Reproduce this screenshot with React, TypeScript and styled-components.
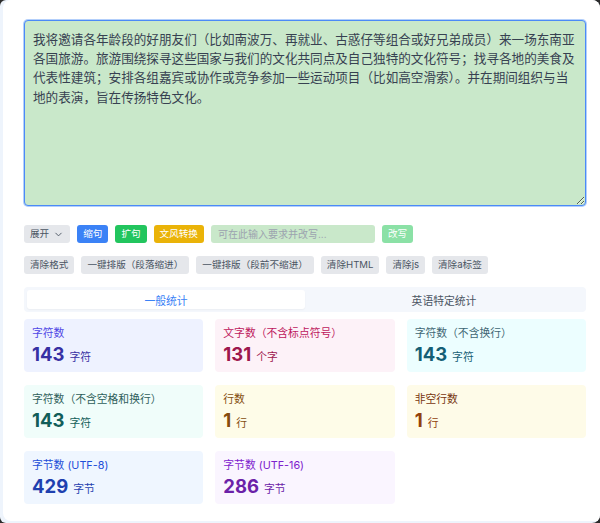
import React from "react";
import styled, { createGlobalStyle } from "styled-components";
import { ChevronDown } from "lucide-react";

const GlobalStyle = createGlobalStyle`
  html, body {
    margin: 0;
    padding: 0;
    background: #2b2b2b;
  }
  body {
    font-family: Inter, "Noto Sans CJK SC", sans-serif;
    color: #374151;
  }
  * { box-sizing: border-box; }
`;

const Frame = styled.div`
  width: 600px;
  height: 523px;
  background: #eef4fc;
  border-radius: 6px 8px 8px 6px;
  overflow: hidden;
  display: flex;
  padding: 0 0 2px 3px;
`;

const Panel = styled.div`
  flex: 1;
  background: #fff;
  border-radius: 8px 0 0 8px;
  padding: 20px 14px 0 21px;
  display: flex;
  flex-direction: column;
`;

const TextArea = styled.textarea`
  display: block;
  width: 100%;
  height: 186px;
  resize: vertical;
  background: #c9e8ca;
  border: 1px solid #4b8af7;
  box-shadow: 0 0 0 1px #b3cffb;
  border-radius: 4px;
  padding: 9px 8px;
  font-family: Inter, "Noto Sans CJK SC", sans-serif;
  font-size: 12.6px;
  line-height: 19.2px;
  color: #374151;
  outline: none;
`;

const Row = styled.div<{ $mt: number }>`
  display: flex;
  align-items: center;
  gap: 7px;
  margin-top: ${(p) => p.$mt}px;
`;

const tones = {
  gray: { bg: "#e5e7eb", fg: "#4b5563" },
  blue: { bg: "#3b82f6", fg: "#ffffff" },
  green: { bg: "#22c55e", fg: "#ffffff" },
  yellow: { bg: "#eab308", fg: "#ffffff" },
  mint: { bg: "#8be1a6", fg: "#ffffff" },
};

type Tone = keyof typeof tones;

const Btn = styled.button<{ $tone: Tone }>`
  height: 18px;
  padding: 0 6px;
  border: none;
  border-radius: 3px;
  background: ${(p) => tones[p.$tone].bg};
  color: ${(p) => tones[p.$tone].fg};
  font-family: Inter, "Noto Sans CJK SC", sans-serif;
  font-size: 9.6px;
  line-height: 18px;
  display: inline-flex;
  align-items: center;
  gap: 4px;
  white-space: nowrap;
`;

const PromptInput = styled.input`
  width: 164px;
  height: 18px;
  border: none;
  border-radius: 3px;
  background: #c9e8ca;
  padding: 0 7px;
  font-family: Inter, "Noto Sans CJK SC", sans-serif;
  font-size: 10px;
  color: #374151;
  outline: none;
  &::placeholder {
    color: #9ca3af;
  }
`;

const Tabs = styled.div`
  margin-top: 13px;
  height: 25px;
  background: #f4f7fc;
  border-radius: 4px;
  padding: 3px;
  display: grid;
  grid-template-columns: 1fr 1fr;
`;

const Tab = styled.div<{ $active?: boolean }>`
  display: flex;
  align-items: center;
  justify-content: center;
  border-radius: 3px;
  font-size: 10.8px;
  background: ${(p) => (p.$active ? "#ffffff" : "transparent")};
  color: ${(p) => (p.$active ? "#3b82f6" : "#4b5563")};
  box-shadow: ${(p) => (p.$active ? "0 1px 2px rgba(0,0,0,0.04)" : "none")};
`;

const Grid = styled.div`
  margin-top: 7px;
  display: grid;
  grid-template-columns: repeat(3, 1fr);
  column-gap: 12px;
  row-gap: 13px;
`;

const Card = styled.div<{ $bg: string }>`
  height: 53px;
  border-radius: 4px;
  background: ${(p) => p.$bg};
  padding: 8px 8px 0 8px;
`;

const Label = styled.div<{ $color: string }>`
  font-size: 10.8px;
  line-height: 14px;
  color: ${(p) => p.$color};
`;

const Value = styled.div<{ $color: string }>`
  display: flex;
  align-items: baseline;
  gap: 5px;
  margin-top: 1px;
  color: ${(p) => p.$color};
  b {
    font-family: Inter, sans-serif;
    font-weight: 700;
    font-size: 18.5px;
    line-height: 24px;
  }
  span {
    font-size: 10.8px;
  }
`;

const stats = [
  { label: "字符数", value: "143", unit: "字符", bg: "#eef2ff", lc: "#4f46e5", vc: "#3730a3" },
  { label: "文字数（不含标点符号）", value: "131", unit: "个字", bg: "#fdf2f8", lc: "#be185d", vc: "#9d174d" },
  { label: "字符数（不含换行）", value: "143", unit: "字符", bg: "#ecfeff", lc: "#3f6674", vc: "#155e75" },
  { label: "字符数（不含空格和换行）", value: "143", unit: "字符", bg: "#f0fdfa", lc: "#2f5f5a", vc: "#115e59" },
  { label: "行数", value: "1", unit: "行", bg: "#fefce8", lc: "#854d0e", vc: "#854d0e" },
  { label: "非空行数", value: "1", unit: "行", bg: "#fefbe8", lc: "#78350f", vc: "#92400e" },
  { label: "字节数 (UTF-8)", value: "429", unit: "字节", bg: "#eff6ff", lc: "#1d4ed8", vc: "#1e40af" },
  { label: "字节数 (UTF-16)", value: "286", unit: "字节", bg: "#faf5ff", lc: "#7e22ce", vc: "#6b21a8" },
];

const text =
  "我将邀请各年龄段的好朋友们（比如南波万、再就业、古惑仔等组合或好兄弟成员）来一场东南亚各国旅游。旅游围绕探寻这些国家与我们的文化共同点及自己独特的文化符号；找寻各地的美食及代表性建筑；安排各组嘉宾或协作或竞争参加一些运动项目（比如高空滑索）。并在期间组织与当地的表演，旨在传扬特色文化。";

export default function App() {
  return (
    <>
      <GlobalStyle />
      <Frame>
        <Panel>
          <TextArea defaultValue={text} />
          <Row $mt={19}>
            <Btn $tone="gray">
              展开 <ChevronDown size={11} strokeWidth={2} />
            </Btn>
            <Btn $tone="blue">缩句</Btn>
            <Btn $tone="green">扩句</Btn>
            <Btn $tone="yellow">文风转换</Btn>
            <PromptInput placeholder="可在此输入要求并改写..." />
            <Btn $tone="mint">改写</Btn>
          </Row>
          <Row $mt={13}>
            <Btn $tone="gray">清除格式</Btn>
            <Btn $tone="gray">一键排版（段落缩进）</Btn>
            <Btn $tone="gray">一键排版（段前不缩进）</Btn>
            <Btn $tone="gray">清除HTML</Btn>
            <Btn $tone="gray">清除js</Btn>
            <Btn $tone="gray">清除a标签</Btn>
          </Row>
          <Tabs>
            <Tab $active>一般统计</Tab>
            <Tab>英语特定统计</Tab>
          </Tabs>
          <Grid>
            {stats.map((s) => (
              <Card key={s.label} $bg={s.bg}>
                <Label $color={s.lc}>{s.label}</Label>
                <Value $color={s.vc}>
                  <b>{s.value}</b>
                  <span>{s.unit}</span>
                </Value>
              </Card>
            ))}
          </Grid>
        </Panel>
      </Frame>
    </>
  );
}
